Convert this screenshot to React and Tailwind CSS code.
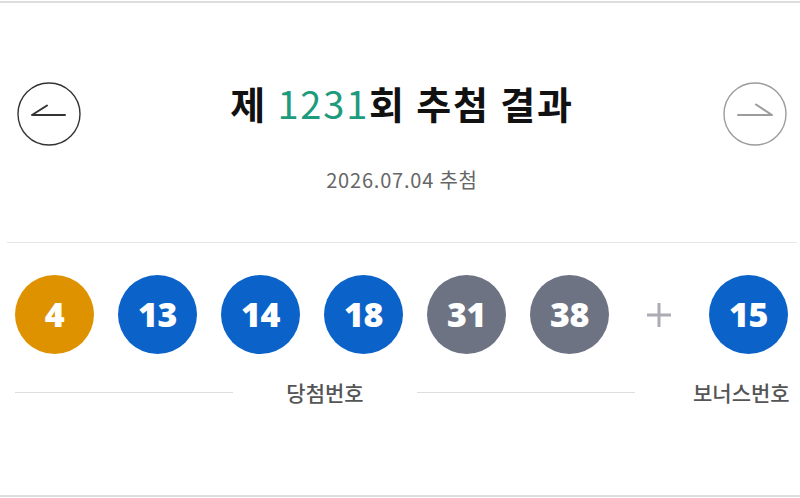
import React from "react";

const balls = [
  { n: 4, c: "bg-[#df9200]" },
  { n: 13, c: "bg-[#0b63c9]" },
  { n: 14, c: "bg-[#0b63c9]" },
  { n: 18, c: "bg-[#0b63c9]" },
  { n: 31, c: "bg-[#6d7383]" },
  { n: 38, c: "bg-[#6d7383]" },
];

function Ball({ n, c }) {
  return (
    <div
      className={`${c} w-[79px] h-[79px] rounded-full flex items-center justify-center text-white text-[34px] font-extrabold tracking-[-0.5px]`}
      style={{ fontFamily: '"Open Sans", "Noto Sans", sans-serif' }}
    >
      {n}
    </div>
  );
}

function NavButton({ dir }) {
  const dark = dir === "prev";
  const stroke = dark ? "#333333" : "#9c9c9c";
  return (
    <button className="w-[64px] h-[64px] shrink-0">
      <svg width="64" height="64" viewBox="0 0 64 64" fill="none">
        <circle cx="32" cy="32" r="31" stroke={stroke} strokeWidth="1.4" />
        {dark ? (
          <path d="M15 33H48M15 33L30 23.5" stroke={stroke} strokeWidth="2" strokeLinecap="round" />
        ) : (
          <path d="M15 33H49M49 33L33 22.5" stroke={stroke} strokeWidth="2" strokeLinecap="round" />
        )}
      </svg>
    </button>
  );
}

export default function App() {
  return (
    <div
      className="w-[800px] h-[498px] bg-white pt-px"
      style={{ fontFamily: '"Noto Sans CJK KR", "Noto Sans", sans-serif' }}
    >
      <div className="h-[496px] border-y-2 border-[#dddddd] flex flex-col">
        {/* round header */}
        <div className="flex items-start pl-[17px] pr-[13px] pt-[79px]">
          <NavButton dir="prev" />
          <div className="flex-1 flex flex-col items-center">
            <h1 className="mt-[-4px] text-[38px] leading-[50px] font-bold text-[#111111] tracking-[1.8px]">
              제 <span className="font-normal text-[#1e9b7c]">1231</span>회 추첨 결과
            </h1>
            <p className="mt-[39px] text-[20px] leading-[26px] text-[#666666] tracking-[0.8px]">
              2026.07.04 추첨
            </p>
          </div>
          <NavButton dir="next" />
        </div>

        <div className="mt-[49px] ml-[7px] mr-[3px] border-t border-[#e6e6e6]" />

        {/* numbers */}
        <div className="flex items-center pl-[15px] mt-[32px]">
          <div className="flex gap-[24px]">
            {balls.map((b) => (
              <Ball key={b.n} {...b} />
            ))}
          </div>
          <div className="w-[100px] flex justify-center">
            <svg width="26" height="26" viewBox="0 0 26 26">
              <path d="M13 1V25M1 13H25" stroke="#acacb4" strokeWidth="3" />
            </svg>
          </div>
          <Ball n={15} c="bg-[#0b63c9]" />
        </div>

        {/* labels */}
        <div className="flex items-center pl-[15px] mt-[25px] text-[21px] leading-[26px] text-[#555555] font-medium">
          <div className="w-[620px] flex items-center">
            <div className="flex-1 border-t border-[#dedede]" />
            <span className="px-[53px]">당첨번호</span>
            <div className="flex-1 border-t border-[#dedede]" />
          </div>
          <span className="ml-[58px]">보너스번호</span>
        </div>
      </div>
    </div>
  );
}
